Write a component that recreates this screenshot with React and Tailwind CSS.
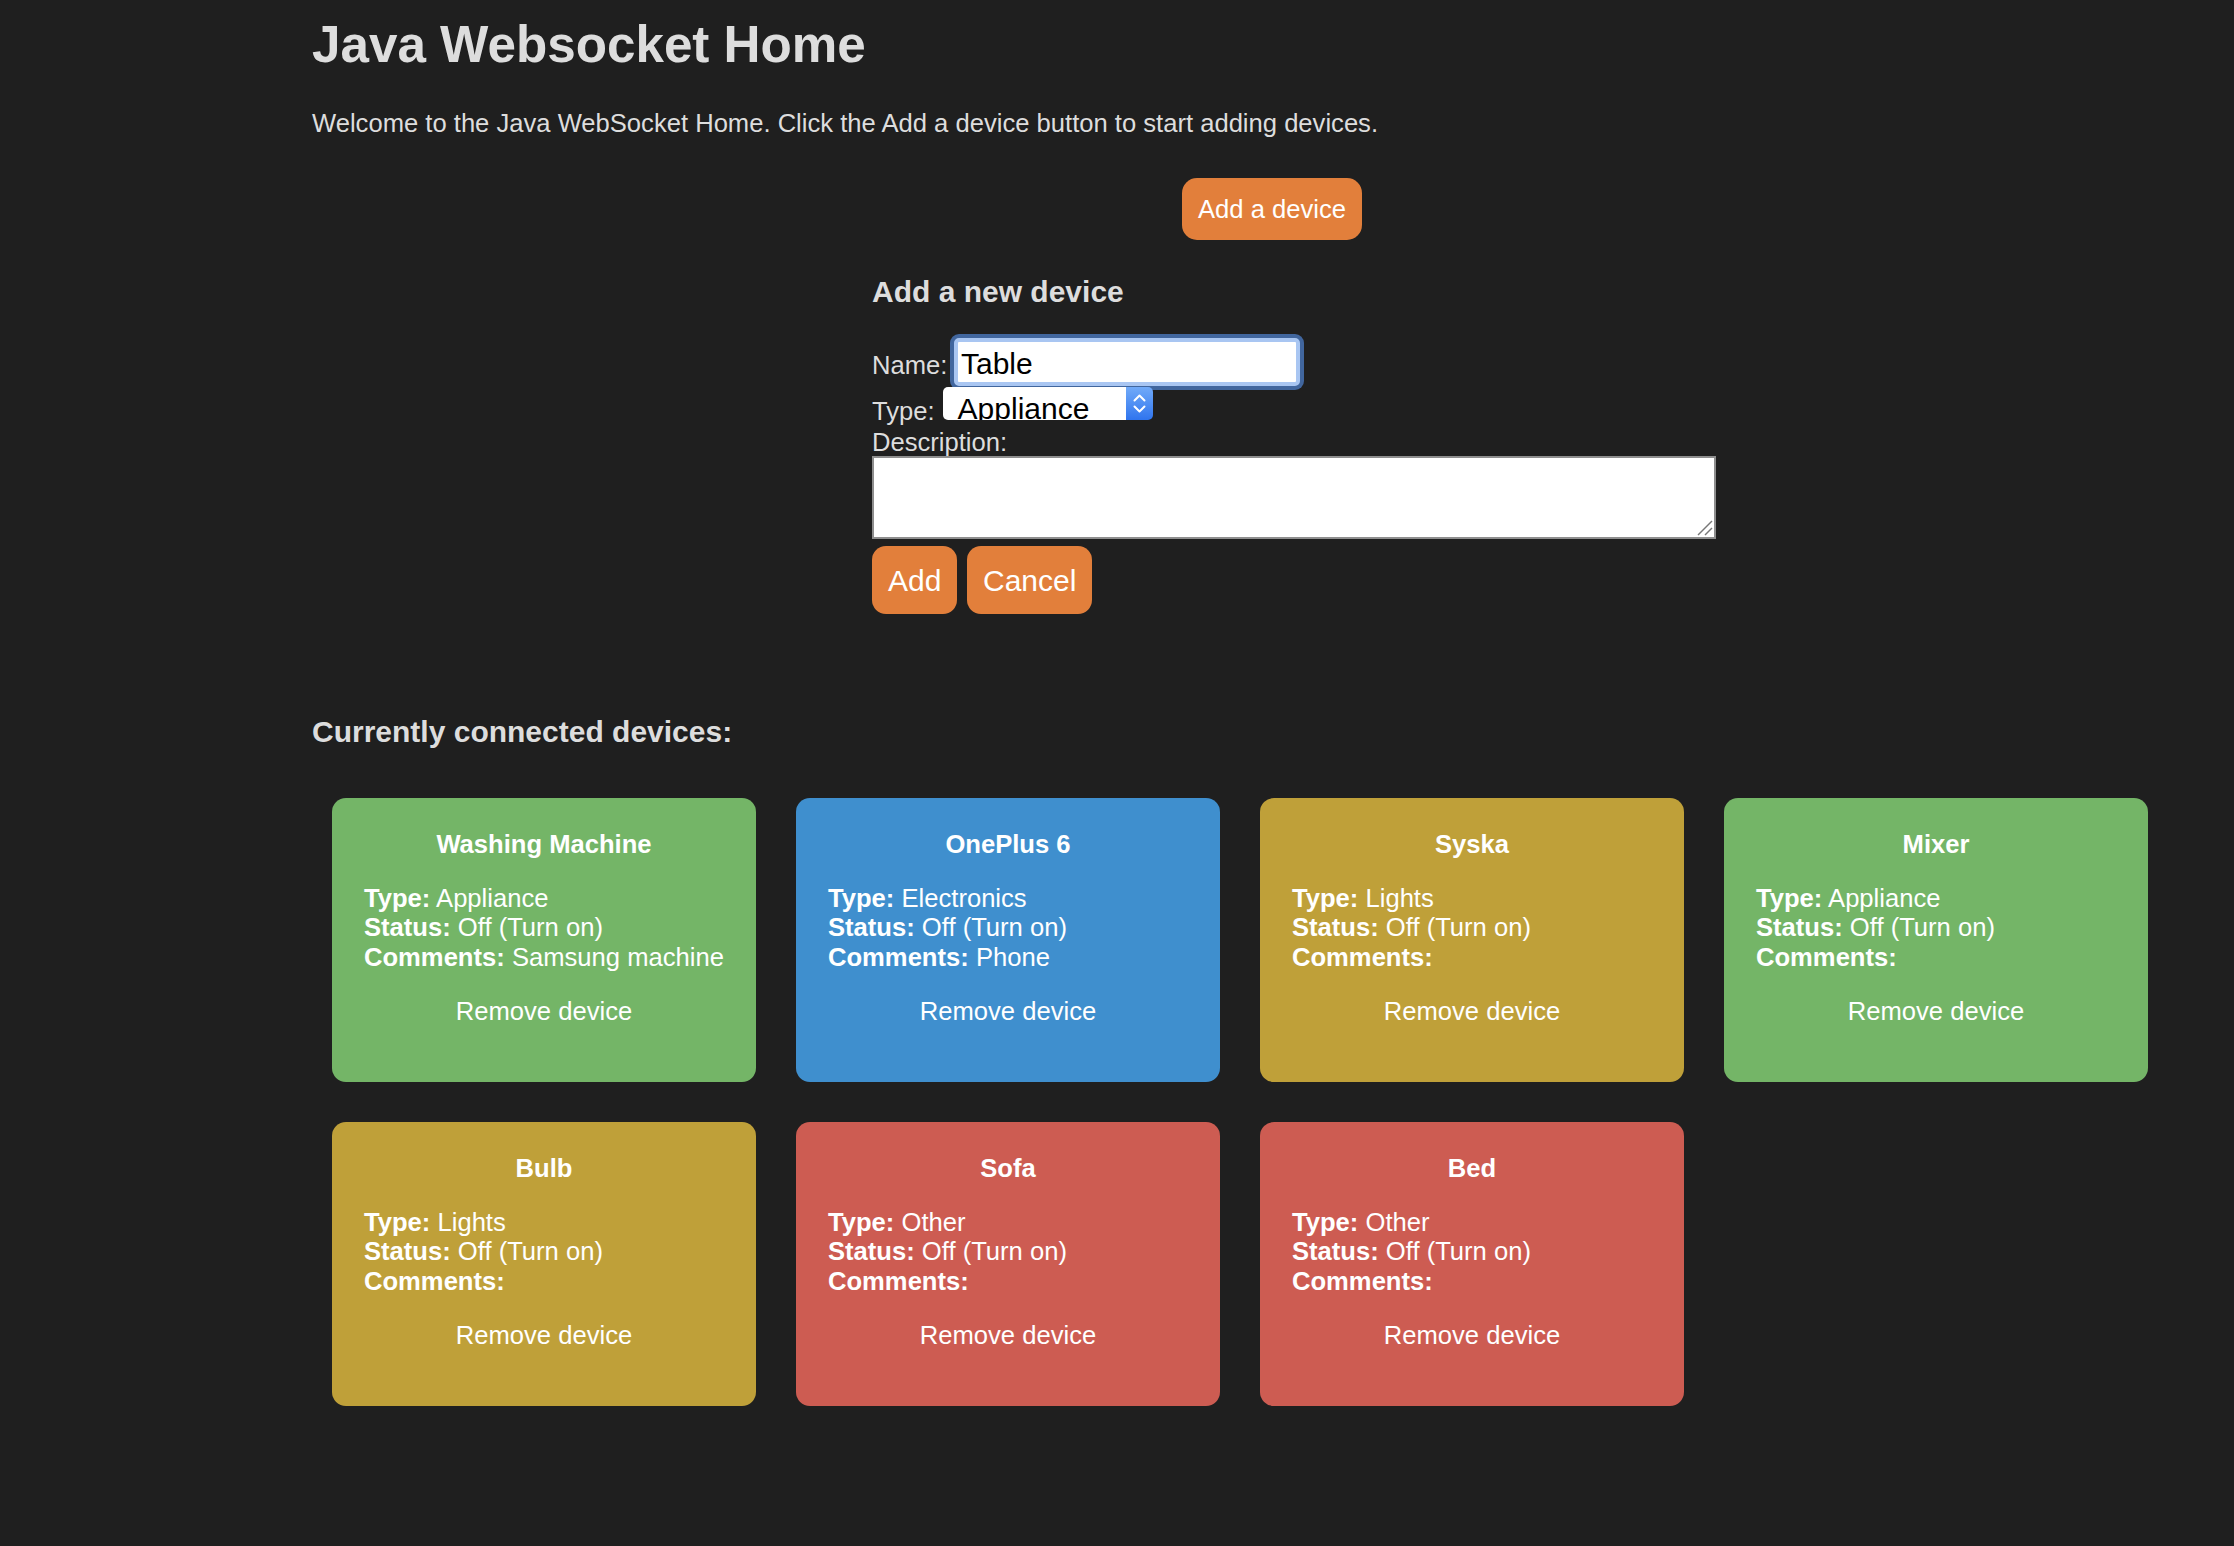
import React from 'react'

const devices = [
  { name: 'Washing Machine', type: 'Appliance', comments: 'Samsung machine' },
  { name: 'OnePlus 6', type: 'Electronics', comments: 'Phone' },
  { name: 'Syska', type: 'Lights', comments: '' },
  { name: 'Mixer', type: 'Appliance', comments: '' },
  { name: 'Bulb', type: 'Lights', comments: '' },
  { name: 'Sofa', type: 'Other', comments: '' },
  { name: 'Bed', type: 'Other', comments: '' },
]

const typeColors = {
  Appliance: 'bg-[#74b567]',
  Electronics: 'bg-[#3f8fce]',
  Lights: 'bg-[#bfa039]',
  Other: 'bg-[#cd5c52]',
}

function DeviceCard({ device }) {
  return (
    <div className={`h-[284px] rounded-[14px] px-[32px] pt-[32px] text-white ${typeColors[device.type]}`}>
      <div className="text-center font-bold">{device.name}</div>
      <div className="mt-[25px]">
        <div><b>Type:</b> {device.type}</div>
        <div><b>Status:</b> Off (Turn on)</div>
        <div><b>Comments:</b> {device.comments}</div>
      </div>
      <div className="mt-[25px] text-center">Remove device</div>
    </div>
  )
}

function TypeSelect() {
  return (
    <div className="ml-[8px] flex h-[33px] w-[210px] overflow-hidden rounded-[5px]">
      <div className="flex-1 bg-white pl-[15px] pt-[7px] text-[30px] leading-[30px] text-black">Appliance</div>
      <div className="w-[27px] bg-gradient-to-b from-[#71aaf8] to-[#2f74ee]">
        <svg width="27" height="33" viewBox="0 0 27 33" fill="none" stroke="white" strokeWidth="2" strokeLinecap="round" strokeLinejoin="round">
          <polyline points="8.5,13.5 13.5,8.5 18.5,13.5" />
          <polyline points="8.5,19.5 13.5,24.5 18.5,19.5" />
        </svg>
      </div>
    </div>
  )
}

export default function App() {
  return (
    <div className="min-h-screen bg-[#1f1f1f] font-['Liberation_Sans',Arial,sans-serif] text-[25.6px] leading-[1.15] text-[#dddddd]">
      <div className="ml-[312px] w-[1920px] pb-[120px]">
        <h1 className="pt-[16px] text-[51.2px] font-bold leading-[1.15]">Java Websocket Home</h1>
        <p className="mt-[34px]">
          Welcome to the Java WebSocket Home. Click the Add a device button to start adding devices.
        </p>

        <div className="mt-[39.6px] flex justify-center">
          <button className="flex h-[62px] items-center rounded-[15px] bg-[#e27f3b] px-[16px] pt-[2px] text-white">
            Add a device
          </button>
        </div>

        <div className="mx-auto w-[800px]">
          <h3 className="mt-[35.4px] text-[30px] font-bold leading-[1.15]">Add a new device</h3>

          <div className="mt-[28px] flex h-[48px] items-start">
            <span className="mt-[13px]">Name:</span>
            <div className="ml-[6.6px] h-[48px] w-[346px] rounded-[5px] border-[4px] border-[#a9c6f2] bg-white pl-[3px] pt-[5.4px] text-[30px] leading-[1.15] text-black shadow-[0_0_0_4px_#41669e]">
              Table
            </div>
          </div>

          <div className="mt-[1px] flex h-[37.8px] items-start">
            <span className="mt-[10px]">Type:</span>
            <TypeSelect />
          </div>

          <div className="mt-[1.6px] h-[29.4px] pt-[1.5px]">Description:</div>
          <div className="relative h-[83px] w-[844px] border-[2px] border-[#8e8e8e] bg-white">
            <svg className="absolute bottom-[1px] right-[1px]" width="16" height="16" viewBox="0 0 16 16" stroke="#777" strokeWidth="1.5">
              <line x1="1" y1="15" x2="15" y2="1" />
              <line x1="8" y1="15" x2="15" y2="8" />
            </svg>
          </div>

          <div className="mt-[7px] flex gap-[9.6px]">
            <button className="h-[68px] rounded-[14px] bg-[#e27f3b] px-[16px] pt-[4px] text-[30px] text-white">Add</button>
            <button className="h-[68px] rounded-[14px] bg-[#e27f3b] px-[16px] pt-[4px] text-[30px] text-white">Cancel</button>
          </div>
        </div>

        <h3 className="mt-[101.7px] text-[30px] font-bold leading-[1.15]">Currently connected devices:</h3>

        <div className="ml-[20px] mt-[47.8px] grid grid-cols-[repeat(4,424px)] gap-[40px]">
          {devices.map((d) => (
            <DeviceCard key={d.name} device={d} />
          ))}
        </div>
      </div>
    </div>
  )
}
